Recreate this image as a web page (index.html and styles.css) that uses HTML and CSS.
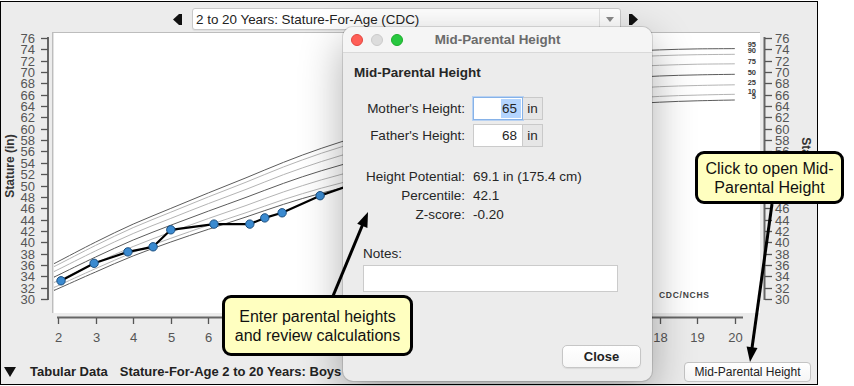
FILE: index.html
```html
<!DOCTYPE html>
<html lang="en">

<head>
    <meta charset="UTF-8">
    <title>Growth Chart - Mid-Parental Height</title>
    <link rel="stylesheet" href="styles.css">
</head>

<body>
    <div class="window">
        <div class="chart-toolbar">
            <svg class="nav-arrow" width="9" height="11" viewBox="0 0 9 11"><path d="M0 5.5 L6 0 H9 V11 H6 Z" /></svg>
            <div class="combo">
                <span class="combo-text">2 to 20 Years: Stature-For-Age (CDC)</span>
                <span class="combo-btn"><svg width="8" height="5" viewBox="0 0 8 5"><path d="M0 0 H8 L4 5 Z" /></svg></span>
            </div>
            <svg class="nav-arrow" width="9" height="11" viewBox="0 0 9 11"><path d="M9 5.5 L3 0 H0 V11 H3 Z" /></svg>
        </div>

        <svg class="chart" id="chart" width="816" height="322" viewBox="1 30 816 322">
            <rect class="plot-bg" x="52" y="32" width="708" height="281" />
            <line class="plot-edge" x1="52.5" y1="32" x2="52.5" y2="313" />
            <line class="plot-edge-soft" x1="53.5" y1="33" x2="53.5" y2="313" />
            <line class="plot-edge" x1="52" y1="32.5" x2="760" y2="32.5" />

            <line class="axis-line" x1="48" y1="37" x2="48" y2="300" />
            <line class="axis-line" x1="764.5" y1="37" x2="764.5" y2="300" />
            <line class="axis-line" x1="57" y1="317.5" x2="743" y2="317.5" />

            <g id="axes"></g>
            <g id="curves"></g>

            <g class="pct-labels">
                <text x="756" y="47">95</text>
                <text x="756" y="52.5">90</text>
                <text x="756" y="64">75</text>
                <text x="756" y="74.5">50</text>
                <text x="756" y="85">25</text>
                <text x="756" y="93.5">10</text>
                <text x="756" y="99">5</text>
            </g>
            <text class="source" x="659" y="298" textLength="50">CDC/NCHS</text>

            <g id="points"></g>

            <text class="axis-title" transform="translate(14 166) rotate(-90)">Stature (in)</text>
            <text class="axis-title" transform="translate(802 169) rotate(90)">Stature (in)</text>
        </svg>

        <div class="bottom-bar">
            <svg class="disclosure" width="12" height="10" viewBox="0 0 12 10"><path d="M0 0 H12 L6 10 Z" /></svg>
            <span class="tab-title">Tabular Data</span>
            <span class="tab-sub">Stature-For-Age 2 to 20 Years: Boys</span>
            <button class="mph-btn">Mid-Parental Height</button>
        </div>
    </div>

    <div class="dialog">
        <div class="dialog-titlebar">
            <div class="lights">
                <span class="light light-close"></span>
                <span class="light light-min"></span>
                <span class="light light-zoom"></span>
            </div>
            <span class="dialog-title">Mid-Parental Height</span>
        </div>
        <div class="dialog-body">
            <div class="dialog-heading">Mid-Parental Height</div>

            <div class="form-grid">
                <span class="form-label">Mother's Height:</span>
                <div class="field field-focus">
                    <span class="field-value"><span class="selected">65</span></span>
                    <span class="field-unit">in</span>
                </div>
                <span class="form-label">Father's Height:</span>
                <div class="field">
                    <span class="field-value">68</span>
                    <span class="field-unit">in</span>
                </div>
            </div>

            <div class="result-grid">
                <span class="form-label">Height Potential:</span>
                <span>69.1 in (175.4 cm)</span>
                <span class="form-label">Percentile:</span>
                <span>42.1</span>
                <span class="form-label">Z-score:</span>
                <span>-0.20</span>
            </div>

            <div class="notes-label">Notes:</div>
            <div class="notes-field"></div>

            <div class="dialog-actions">
                <button class="close-btn">Close</button>
            </div>
        </div>
    </div>

    <svg class="arrows" width="854" height="386" viewBox="0 0 854 386">
        <line x1="333" y1="296" x2="362.5" y2="225" />
        <polygon points="368,212 367.4,228 357.2,223.8" />
        <line x1="772" y1="204" x2="752" y2="348" />
        <polygon points="750,362 757.5,347.9 746.6,346.4" />
    </svg>

    <div class="callout callout-enter">Enter parental heights<br>and review calculations</div>
    <div class="callout callout-click">Click to open Mid-<br>Parental Height</div>

    <script src="chart.js"></script>
</body>

</html>
```

FILE: styles.css
```css
body {
    margin: 0;
    width: 854px;
    height: 386px;
    position: relative;
    overflow: hidden;
    background: #fff;
    font-family: "Liberation Sans", Arial, sans-serif;
    color: #222;
}

.window {
    margin-top: 1px;
    width: 816px;
    height: 382px;
    border: 1px solid #000;
    background: #ececec;
    display: flex;
    flex-direction: column;
}

/* chart selector */
.chart-toolbar {
    height: 28px;
    box-sizing: border-box;
    padding: 6px 0 0 172px;
    display: flex;
    align-items: center;
}

.nav-arrow {
    display: block;
    fill: #111;
}

.combo {
    margin: 0 8px 0 10px;
    width: 429px;
    height: 22px;
    box-sizing: border-box;
    border: 1px solid #c9c9c9;
    border-radius: 3px;
    background: #fff;
    display: flex;
    align-items: center;
    box-shadow: 0 1px 1px rgba(0, 0, 0, 0.06);
}

.combo-text {
    flex: 1;
    padding-left: 3px;
    font-size: 13.4px;
    color: #222;
}

.combo-btn {
    width: 20px;
    height: 100%;
    border-left: 1px solid #e4e4e4;
    display: flex;
    align-items: center;
    justify-content: center;
}

.combo-btn svg {
    fill: #8a8a8a;
}

/* chart */
.chart {
    display: block;
}

.plot-bg {
    fill: #fff;
}

.plot-edge {
    stroke: #bdbdbd;
    stroke-width: 1;
}

.plot-edge-soft {
    stroke: #e2e2e2;
    stroke-width: 1;
}

.axis-line {
    stroke: #666;
    stroke-width: 2;
}

.tick {
    stroke: #555;
    stroke-width: 1.3;
}

.axis-num {
    font-size: 13px;
    fill: #555;
}

.axis-title {
    font-size: 12px;
    font-weight: bold;
    fill: #333;
    text-anchor: middle;
}

.curve {
    fill: none;
    stroke-width: 1;
}

.curve-dark {
    stroke: #5c5c5c;
}

.curve-light {
    stroke: #b4b4b4;
}

.pct-labels text {
    font-size: 7.5px;
    font-weight: bold;
    fill: #3a3a3a;
    text-anchor: end;
}

.source {
    font-size: 8.5px;
    font-weight: bold;
    fill: #444;
}

.data-line {
    fill: none;
    stroke: #000;
    stroke-width: 2.2;
    stroke-linejoin: round;
}

.data-point {
    fill: #3a8ad0;
    stroke: #1c4f80;
    stroke-width: 1;
}

/* bottom bar */
.bottom-bar {
    height: 32px;
    box-sizing: border-box;
    padding: 9px 6px 2px 3px;
    display: flex;
    align-items: center;
    font-size: 13px;
}

.disclosure {
    display: block;
    fill: #111;
}

.tab-title {
    margin-left: 14px;
    font-weight: bold;
}

.tab-sub {
    margin-left: 12px;
    font-weight: bold;
}

.mph-btn {
    margin-left: auto;
    width: 127px;
    height: 20px;
    padding: 0;
    border: 1px solid #c4c4c4;
    border-radius: 4px;
    background: linear-gradient(#fff, #f5f5f5);
    font-family: inherit;
    font-size: 12px;
    color: #222;
}

/* dialog */
.dialog {
    position: absolute;
    left: 343px;
    top: 27px;
    width: 309px;
    height: 354px;
    border-radius: 10px;
    overflow: hidden;
    background: #ececec;
    box-shadow: 0 0 0 1px rgba(0, 0, 0, 0.12), 0 14px 44px rgba(0, 0, 0, 0.32);
}

.dialog-titlebar {
    height: 25px;
    position: relative;
    background: #f5f5f5;
    border-bottom: 1px solid #d9d9d9;
    display: flex;
    align-items: center;
    justify-content: center;
}

.lights {
    position: absolute;
    left: 8px;
    top: 7px;
    display: flex;
    gap: 8px;
}

.light {
    width: 12px;
    height: 12px;
    box-sizing: border-box;
    border-radius: 50%;
}

.light-close {
    background: #ff5f57;
    border: 1px solid #e2463f;
}

.light-min {
    background: #dcdcdc;
    border: 1px solid #cacaca;
}

.light-zoom {
    background: #28c840;
    border: 1px solid #1dad2b;
}

.dialog-title {
    font-size: 13.4px;
    font-weight: bold;
    color: #6b6b6b;
}

.dialog-body {
    padding: 0 11px;
    font-size: 13.5px;
    color: #262626;
}

.dialog-heading {
    margin-top: 12px;
    line-height: 16px;
    font-weight: bold;
}

.form-grid {
    margin-top: 16px;
    padding-left: 9px;
    display: grid;
    grid-template-columns: 102px auto;
    grid-auto-rows: 23px;
    column-gap: 8px;
    row-gap: 4px;
    align-items: center;
}

.form-label {
    text-align: right;
    white-space: nowrap;
}

.field {
    display: flex;
    height: 23px;
}

.field-value {
    width: 50px;
    box-sizing: border-box;
    border: 1px solid #cbcbcb;
    background: #fff;
    text-align: right;
    padding-right: 5px;
    line-height: 21px;
}

.field-focus .field-value {
    padding-right: 1px;
    border-color: #86b2e8;
    box-shadow: 0 0 0 1px #b9d2f2;
}

.selected {
    background: #b4d5fe;
    padding: 2px 4px 2px 1px;
}

.field-unit {
    width: 20px;
    box-sizing: border-box;
    border: 1px solid #c9c9c9;
    border-left: none;
    background: #e6e6e6;
    text-align: center;
    line-height: 21px;
}

.result-grid {
    margin-top: 20px;
    padding-left: 9px;
    display: grid;
    grid-template-columns: 102px auto;
    grid-auto-rows: 19px;
    column-gap: 8px;
    align-items: center;
}

.notes-label {
    margin-top: 22px;
    padding-left: 9px;
    line-height: 16px;
}

.notes-field {
    margin: 3px 0 0 9px;
    width: 255px;
    height: 27px;
    box-sizing: border-box;
    border: 1px solid #cbcbcb;
    background: #fff;
}

.dialog-actions {
    margin-top: 53px;
    display: flex;
    justify-content: flex-end;
}

.close-btn {
    width: 79px;
    height: 23px;
    padding: 0;
    border: 1px solid #c6c6c6;
    border-radius: 5px;
    background: linear-gradient(#fff, #f7f7f7);
    box-shadow: 0 1px 1px rgba(0, 0, 0, 0.08);
    font-family: inherit;
    font-size: 13px;
    font-weight: bold;
    color: #222;
}

/* annotations */
.arrows {
    position: absolute;
    left: 0;
    top: 0;
    pointer-events: none;
}

.arrows line {
    stroke: #000;
    stroke-width: 3;
}

.arrows polygon {
    fill: #000;
}

.callout {
    position: absolute;
    box-sizing: border-box;
    border: 3px solid #000;
    border-radius: 9px;
    background: #ffffc0;
    display: flex;
    align-items: center;
    justify-content: center;
    text-align: center;
    font-size: 16px;
    line-height: 19px;
    color: #111;
}

.callout-enter {
    left: 222px;
    top: 295px;
    width: 191px;
    height: 61px;
}

.callout-click {
    left: 695px;
    top: 151px;
    width: 149px;
    height: 53px;
}
```

FILE: chart.js
```js
var NS = 'http://www.w3.org/2000/svg';

function add(parent, tag, attrs, text) {
    var node = document.createElementNS(NS, tag);
    for (var key in attrs) {
        node.setAttribute(key, attrs[key]);
    }
    if (text !== undefined) node.textContent = text;
    parent.appendChild(node);
    return node;
}

function xAge(age) {
    return 58 + (age - 2) * 37.6;
}

function yIn(v) {
    return 38 + (76 - v) * 5.674;
}

function smooth(pts) {
    var r = function (n) { return Math.round(n * 10) / 10; };
    var d = 'M' + r(pts[0][0]) + ' ' + r(pts[0][1]);
    for (var i = 0; i < pts.length - 1; i++) {
        var p0 = pts[i - 1] || pts[i];
        var p1 = pts[i];
        var p2 = pts[i + 1];
        var p3 = pts[i + 2] || p2;
        d += ' C' + r(p1[0] + (p2[0] - p0[0]) / 6) + ' ' + r(p1[1] + (p2[1] - p0[1]) / 6) +
            ' ' + r(p2[0] - (p3[0] - p1[0]) / 6) + ' ' + r(p2[1] - (p3[1] - p1[1]) / 6) +
            ' ' + r(p2[0]) + ' ' + r(p2[1]);
    }
    return d;
}

// axes
var axes = document.getElementById('axes');
for (var v = 30; v <= 76; v += 2) {
    var y = Math.round(yIn(v)) + 0.5;
    add(axes, 'line', { x1: 41, y1: y, x2: 48, y2: y, class: 'tick' });
    add(axes, 'line', { x1: 765, y1: y, x2: 772, y2: y, class: 'tick' });
    add(axes, 'text', { x: 35, y: y + 4.5, class: 'axis-num', 'text-anchor': 'end' }, v);
    add(axes, 'text', { x: 775, y: y + 4.5, class: 'axis-num' }, v);
}
for (var a = 2; a <= 20; a++) {
    var x = Math.round(xAge(a)) + 0.5;
    add(axes, 'line', { x1: x, y1: 318, x2: x, y2: 324, class: 'tick' });
    add(axes, 'text', { x: x, y: 342, class: 'axis-num', 'text-anchor': 'middle' }, a);
}

// CDC percentile curves, boys 2-20 (inches)
var p50 = [34.2, 37.4, 40.4, 43.0, 45.5, 47.9, 50.4, 52.6, 54.5, 56.5, 58.7, 61.4, 64.3, 66.5, 68.1, 68.9, 69.3, 69.5, 69.6];
var sd = [1.45, 1.6, 1.7, 1.8, 1.95, 2.1, 2.25, 2.4, 2.55, 2.7, 2.9, 3.1, 3.2, 3.1, 2.95, 2.85, 2.8, 2.78, 2.75];
var percentiles = [
    { z: -1.645, dark: true },
    { z: -1.28, dark: false },
    { z: -0.674, dark: false },
    { z: 0, dark: true },
    { z: 0.674, dark: false },
    { z: 1.28, dark: false },
    { z: 1.645, dark: true }
];

var curves = document.getElementById('curves');
percentiles.forEach(function (p) {
    var pts = p50.map(function (m, i) {
        return [xAge(i + 2), yIn(m + p.z * sd[i])];
    });
    // start the curve a little before age 2, as the chart does
    var first = pts[0], next = pts[1];
    pts.unshift([first[0] - 3, first[1] + (first[1] - next[1]) * 3 / 37.6]);
    add(curves, 'path', { d: smooth(pts), class: 'curve ' + (p.dark ? 'curve-dark' : 'curve-light') });
});

// measurements
var visits = [
    [2.08, 33.2], [2.96, 36.3], [3.86, 38.3], [4.53, 39.2], [5.0, 42.2],
    [6.15, 43.2], [7.1, 43.2], [7.5, 44.3], [7.96, 45.2], [8.97, 48.2], [10.0, 50.6]
];
var points = document.getElementById('points');
add(points, 'polyline', {
    points: visits.map(function (p) { return xAge(p[0]).toFixed(1) + ',' + yIn(p[1]).toFixed(1); }).join(' '),
    class: 'data-line'
});
visits.forEach(function (p) {
    add(points, 'circle', { cx: xAge(p[0]).toFixed(1), cy: yIn(p[1]).toFixed(1), r: 4.2, class: 'data-point' });
});
```
